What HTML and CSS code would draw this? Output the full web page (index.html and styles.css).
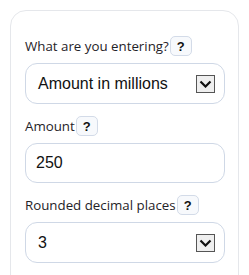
FILE: index.html
```html
<!DOCTYPE html>
<html>
<head>
<meta charset="utf-8">
<link rel="stylesheet" href="styles.css">
</head>
<body>
<div class="card">
  <div class="label-row"><span class="label">What are you entering?</span><span class="help">?</span></div>
  <div class="field select">
    <span class="value">Amount in millions</span>
    <span class="arrow"><svg width="13" height="8" viewBox="0 0 13 8"><polyline points="1.5,1.5 6.5,6.5 11.5,1.5" fill="none" stroke="#111" stroke-width="2.2"/></svg></span>
  </div>
  <div class="label-row gap"><span class="label">Amount</span><span class="help">?</span></div>
  <div class="field input"><span class="value">250</span></div>
  <div class="label-row gap"><span class="label">Rounded decimal places</span><span class="help">?</span></div>
  <div class="field select">
    <span class="value">3</span>
    <span class="arrow"><svg width="13" height="8" viewBox="0 0 13 8"><polyline points="1.5,1.5 6.5,6.5 11.5,1.5" fill="none" stroke="#111" stroke-width="2.2"/></svg></span>
  </div>
</div>
</body>
</html>
```
FILE: styles.css
```css
html, body { margin: 0; padding: 0; background: #fff; }
body { font-family: "Open Sans", "Noto Sans", sans-serif; color: #1f2328; }
.card {
  margin: 10px 0 0 10px;
  width: 200px;
  height: 275px;
  border: 1px solid #e5e7eb;
  border-radius: 16px;
  padding: 25px 13px 0 14px;
}
.label-row { display: flex; align-items: center; height: 20px; gap: 1px; }
.label-row.gap { margin-top: 12px; }
.label { font-size: 13.3px; color: #1f2328; }
.help {
  width: 20px; height: 18px;
  border: 1px solid #d3dbe8;
  border-radius: 5px;
  background: #f7f9fc;
  font-family: "Liberation Sans", Arial, sans-serif;
  font-weight: bold; font-size: 13px; color: #111;
  display: flex; align-items: center; justify-content: center;
}
.field {
  margin-top: 7px;
  height: 39px;
  border: 1px solid #cfd8e6;
  border-radius: 12px;
  display: flex; align-items: center; justify-content: space-between;
  font-family: "Liberation Sans", Arial, sans-serif;
  color: #111;
}
.field.input { height: 38px; }
.value { font-size: 16px; }
.select .value { padding-left: 12px; }
.input .value { padding-left: 10px; }
.arrow {
  width: 17px; height: 16px;
  margin-right: 9px;
  border: 1px solid #555;
  background: #efefef;
  display: flex; align-items: center; justify-content: center;
}
```
